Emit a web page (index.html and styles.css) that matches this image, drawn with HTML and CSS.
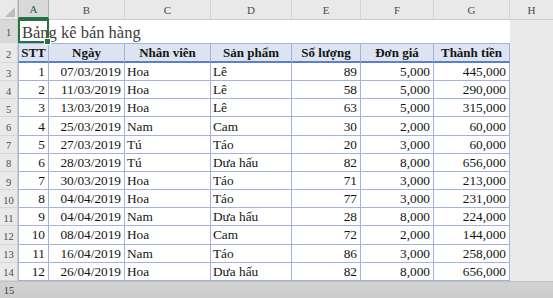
FILE: index.html
```html
<!DOCTYPE html>
<html lang="vi">
<head>
<meta charset="utf-8">
<title>Bảng kê bán hàng</title>
<link rel="stylesheet" href="styles.css">
</head>
<body>
<div class="sheet">
  <div class="row colhdr">
    <div class="corner"><span class="tri"></span></div>
    <div class="ch ch-sel">A</div><div class="ch">B</div><div class="ch">C</div><div class="ch">D</div><div class="ch">E</div><div class="ch">F</div><div class="ch">G</div><div class="ch ch-last">H</div>
  </div>
  <div class="row r1">
    <div class="rh rh-sel">1</div>
    <div class="title-cell"><span class="sel"><span class="handle"></span></span><span class="title">Bảng kê bán hàng</span></div>
    <div class="out"></div>
  </div>
  <div class="row r2">
    <div class="rh">2</div>
    <div class="th first">STT</div><div class="th">Ngày</div><div class="th">Nhân viên</div><div class="th">Sản phẩm</div><div class="th">Số lượng</div><div class="th">Đơn giá</div><div class="th">Thành tiền</div>
    <div class="out"></div>
  </div>
  <div class="row rd"><div class="rh">3</div><div class="td first num">1</div><div class="td num">07/03/2019</div><div class="td">Hoa</div><div class="td">Lê</div><div class="td num">89</div><div class="td num">5,000</div><div class="td num">445,000</div><div class="out"></div></div>
  <div class="row rd"><div class="rh">4</div><div class="td first num">2</div><div class="td num">11/03/2019</div><div class="td">Hoa</div><div class="td">Lê</div><div class="td num">58</div><div class="td num">5,000</div><div class="td num">290,000</div><div class="out"></div></div>
  <div class="row rd"><div class="rh">5</div><div class="td first num">3</div><div class="td num">13/03/2019</div><div class="td">Hoa</div><div class="td">Lê</div><div class="td num">63</div><div class="td num">5,000</div><div class="td num">315,000</div><div class="out"></div></div>
  <div class="row rd"><div class="rh">6</div><div class="td first num">4</div><div class="td num">25/03/2019</div><div class="td">Nam</div><div class="td">Cam</div><div class="td num">30</div><div class="td num">2,000</div><div class="td num">60,000</div><div class="out"></div></div>
  <div class="row rd"><div class="rh">7</div><div class="td first num">5</div><div class="td num">27/03/2019</div><div class="td">Tú</div><div class="td">Táo</div><div class="td num">20</div><div class="td num">3,000</div><div class="td num">60,000</div><div class="out"></div></div>
  <div class="row rd"><div class="rh">8</div><div class="td first num">6</div><div class="td num">28/03/2019</div><div class="td">Tú</div><div class="td">Dưa hấu</div><div class="td num">82</div><div class="td num">8,000</div><div class="td num">656,000</div><div class="out"></div></div>
  <div class="row rd"><div class="rh">9</div><div class="td first num">7</div><div class="td num">30/03/2019</div><div class="td">Hoa</div><div class="td">Táo</div><div class="td num">71</div><div class="td num">3,000</div><div class="td num">213,000</div><div class="out"></div></div>
  <div class="row rd"><div class="rh">10</div><div class="td first num">8</div><div class="td num">04/04/2019</div><div class="td">Hoa</div><div class="td">Táo</div><div class="td num">77</div><div class="td num">3,000</div><div class="td num">231,000</div><div class="out"></div></div>
  <div class="row rd"><div class="rh">11</div><div class="td first num">9</div><div class="td num">04/04/2019</div><div class="td">Nam</div><div class="td">Dưa hấu</div><div class="td num">28</div><div class="td num">8,000</div><div class="td num">224,000</div><div class="out"></div></div>
  <div class="row rd"><div class="rh">12</div><div class="td first num">10</div><div class="td num">08/04/2019</div><div class="td">Hoa</div><div class="td">Cam</div><div class="td num">72</div><div class="td num">2,000</div><div class="td num">144,000</div><div class="out"></div></div>
  <div class="row rd"><div class="rh">13</div><div class="td first num">11</div><div class="td num">16/04/2019</div><div class="td">Nam</div><div class="td">Táo</div><div class="td num">86</div><div class="td num">3,000</div><div class="td num">258,000</div><div class="out"></div></div>
  <div class="row rd"><div class="rh">14</div><div class="td first num">12</div><div class="td num">26/04/2019</div><div class="td">Hoa</div><div class="td">Dưa hấu</div><div class="td num">82</div><div class="td num">8,000</div><div class="td num">656,000</div><div class="out"></div></div>
  <div class="bottom">
    <div class="brow"><div class="rh rh-b">15</div></div>
    <div class="brow"><div class="rh rh-b">16</div></div>
  </div>
</div>
</body>
</html>
```

FILE: styles.css
```css
html, body {
  margin: 0;
  padding: 0;
  background: #e4e4e4;
  overflow: hidden;
}
.sheet {
  width: 553px;
  height: 298px;
  display: flex;
  flex-direction: column;
  font-family: "Liberation Serif", "Times New Roman", serif;
  color: #141414;
  overflow: hidden;
}
.row {
  display: grid;
  grid-template-columns: 18px 31px 76px 86px 81px 69px 73px 76px 43px;
  flex: none;
}
.colhdr {
  height: 20px;
  background: #e9e9e9;
  border-bottom: 1px solid #cdcdcd;
  box-sizing: border-box;
}
.corner {
  position: relative;
  border-right: 1px solid #cdcdcd;
}
.tri {
  position: absolute;
  right: 2px;
  bottom: 2px;
  width: 0;
  height: 0;
  border-left: 10px solid transparent;
  border-bottom: 10px solid #bdbdbd;
}
.ch {
  display: flex;
  align-items: center;
  justify-content: center;
  font-size: 11px;
  color: #4a4a4a;
  border-right: 1px solid #d3d3d3;
}
.ch-sel {
  background: #d9d9d9;
  border-bottom: 2px solid #217346;
  border-left: 1px solid #9fb5a8;
  border-right: 1px solid #9fb5a8;
  color: #2a5e3f;
}
.ch-last { border-right: none; }
.rh {
  display: flex;
  align-items: center;
  justify-content: center;
  font-size: 10.5px;
  color: #4a4a4a;
  background: #e9e9e9;
  border-right: 1px solid #cdcdcd;
  border-bottom: 1px solid #d6d6d6;
  box-sizing: border-box;
  padding-top: 3px;
}
.rh-sel { background: #d9d9d9; color: #2a5e3f; }
.r1 {
  height: 23px;
  grid-template-columns: 18px 492px 43px;
}
.title-cell {
  position: relative;
  background: #fff;
  display: flex;
  align-items: flex-end;
}
.title {
  font-size: 16.5px;
  color: #3c3c3c;
  padding-left: 4px;
  line-height: 20px;
}
.sel {
  position: absolute;
  left: 0;
  top: -1px;
  width: 31px;
  height: 24px;
  box-sizing: border-box;
  border: 2px solid #217346;
}
.handle {
  position: absolute;
  right: -4px;
  bottom: -4px;
  width: 5px;
  height: 5px;
  background: #217346;
  border: 1px solid #fff;
}
.out {
  background: #eaeaea;
}
.r2 { height: 20px; }
.th {
  background: #dce4f2;
  font-weight: bold;
  font-size: 13px;
  display: flex;
  align-items: center;
  justify-content: center;
  border-top: 1px solid #a5b3da;
  border-right: 1px solid #a5b3da;
  border-bottom: 2px solid #5b7fcb;
  box-sizing: border-box;
  padding-top: 1px;
}
.first { border-left: 1px solid #a5b3da; }
.rd { height: 18.17px; }
.td {
  background: #fff;
  font-size: 13.3px;
  display: flex;
  align-items: center;
  padding: 1px 3px 0 2px;
  border-right: 1px solid #a5b3da;
  border-bottom: 1px solid #a5b3da;
  box-sizing: border-box;
  white-space: nowrap;
  overflow: hidden;
}
.num { justify-content: flex-end; }
.bottom {
  flex: 1;
  background: linear-gradient(#d2d2d2, #c6c6c6);
  border-top: 1px solid #c2c2c2;
}
.brow {
  display: grid;
  grid-template-columns: 18px;
  height: 16px;
}
.rh-b {
  background: transparent;
  border: none;
  padding-top: 1px;
  color: #3a3a3a;
}
```
